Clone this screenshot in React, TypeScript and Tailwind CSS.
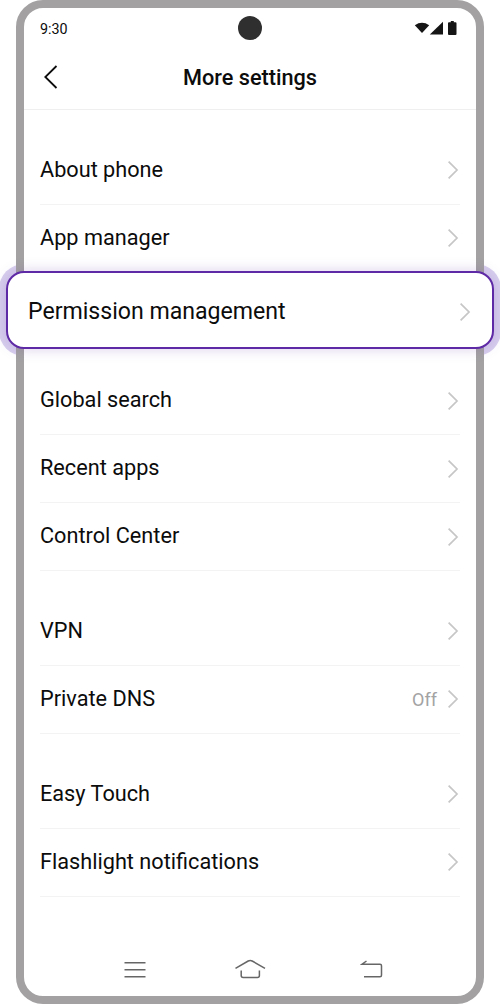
import React from "react";

const Chevron = () => (
  <svg width="12" height="20" viewBox="0 0 12 20" fill="none" stroke="#c6c6c6" strokeWidth="1.7" className="shrink-0">
    <path d="M1.600 1.700 10 10 1.600 18.300" />
  </svg>
);

function Row({ label, value, last }: { label: string; value?: string; last?: boolean }) {
  return (
    <div className={`flex h-[67.9px] items-center border-b pr-px ${last ? "border-transparent" : "border-[#f3f3f3]"}`}>
      <span className="flex-1 pb-px text-[21.7px] leading-none whitespace-nowrap">{label}</span>
      {value && <span className="mr-[10px] pt-px text-[18px] leading-none text-[#a3a3a3]">{value}</span>}
      <Chevron />
    </div>
  );
}

export default function App() {
  return (
    <div className="relative h-[1004px] w-[500px] overflow-hidden bg-white font-['Roboto',sans-serif] text-[#0c0c0c]">
      <div className="absolute top-[264px] -left-px h-[92px] w-[502px] rounded-[25px] bg-[#d8d0ee]" />
      <div className="relative mx-4 flex h-[1004px] flex-col rounded-[27px] border-8 border-[#a3a1a2] bg-white">
        <div className="relative flex h-10 items-center justify-between px-4">
          <span className="pt-[2px] text-[14.3px] leading-none">9:30</span>
          <div className="absolute top-2 left-[214px] size-6 rounded-full bg-[#2f2f2f]" />
          <svg width="44" height="16" viewBox="0 0 44 16" fill="#151515" className="mr-[2px]">
            <path d="M.8 5.200Q8 .4 15.200 5.200L8 13Z" />
            <path d="M15.800 14.600 29 1.700v12.900Z" />
            <path d="M36.800 1h3v1.300h1.700q1 0 1 1v10.700q0 1-1 1h-6.500q-1 0-1-1V3.300q0-1 1-1h1.800Z" />
          </svg>
        </div>
        <div className="relative flex h-[62px] items-center justify-center border-b border-[#efefef]">
          <svg width="14" height="24" viewBox="0 0 14 24" fill="none" stroke="#0c0c0c" strokeWidth="1.8" className="absolute top-[17px] left-5">
            <path d="M12.500 1 1.300 12 12.500 23" />
          </svg>
          <h1 className="pb-[2px] text-[21.7px] leading-none font-medium">More settings</h1>
        </div>
        <main className="flex flex-col px-4 pt-[26.800px]">
          <section>
            <Row label="About phone" />
            <Row label="App manager" last />
          </section>
          <section className="pt-[94.800px]">
            <Row label="Global search" />
            <Row label="Recent apps" />
            <Row label="Control Center" />
          </section>
          <section className="pt-[27px]">
            <Row label="VPN" />
            <Row label="Private DNS" value="Off" />
          </section>
          <section className="pt-[27px]">
            <Row label="Easy Touch" />
            <Row label="Flashlight notifications" />
          </section>
        </main>
        <nav className="mt-auto mb-[14px] flex h-6 items-center pl-[99px] text-[#666]">
          <svg width="24" height="24" viewBox="0 0 24 24" fill="none" stroke="currentColor" strokeWidth="1.6">
            <path d="M1.500 4.700h21M1.500 11.700h21M1.500 18.700h21" />
          </svg>
          <svg width="32" height="24" viewBox="0 0 32 24" fill="none" stroke="currentColor" strokeWidth="1.500" className="ml-[87px]">
            <path d="M1.500 10.300 14.200 3Q16.200 1.900 18.200 3L31 10.300M7.200 12.500v5q0 2 2 2h14.200q2 0 2-2v-5" />
          </svg>
          <svg width="24" height="24" viewBox="0 0 24 24" fill="none" stroke="currentColor" strokeWidth="1.500" className="ml-[94px]">
            <path d="M6.500 3 2 6.200h18q1.500 0 1.500 1.500v9.500q0 1.500-1.500 1.500H4" />
          </svg>
        </nav>
      </div>
      <div className="absolute top-[271px] left-[6px] flex h-[78px] w-[488px] items-center rounded-[18px] border-2 border-[#5f2aa5] bg-white pt-1 pr-[21px] pl-5 shadow-[0_0_14px_rgba(95,42,165,0.22)]">
        <span className="flex-1 text-[23.1px] leading-none">Permission management</span>
        <Chevron />
      </div>
    </div>
  );
}
